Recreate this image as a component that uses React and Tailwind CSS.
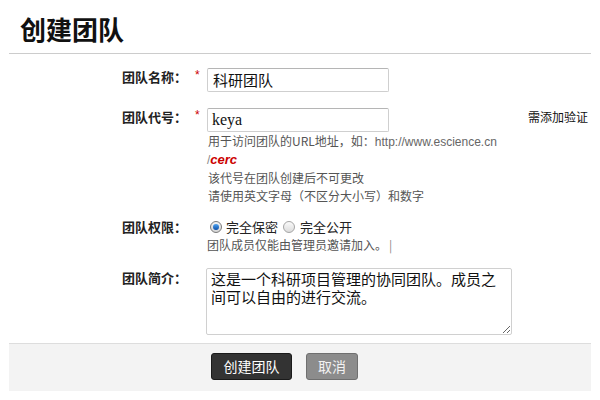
const CJK = { fontFamily: "'Noto Sans CJK SC', 'Noto Sans', sans-serif" };

function Label({ children }) {
  return (
    <div className="w-[73px] shrink-0 text-[13px] font-bold leading-[18px] text-[#222]" style={CJK}>
      {children}
    </div>
  );
}

function Star({ show = true }) {
  return (
    <div className="w-[12px] shrink-0 text-[12px] leading-[14px] text-[#c00]" style={{ fontFamily: "'Liberation Sans', sans-serif" }}>
      {show ? '*' : ''}
    </div>
  );
}

function Radio({ checked }) {
  return checked ? (
    <span className="flex h-[12px] w-[12px] items-center justify-center rounded-full border border-[#7a7a7a] bg-gradient-to-b from-[#f4f4f4] to-[#d6d6d6]">
      <span className="block h-[6px] w-[6px] rounded-full bg-gradient-to-b from-[#4fa3f0] to-[#0b4fa8]" />
    </span>
  ) : (
    <span className="block h-[12px] w-[12px] rounded-full border border-[#a5a5a5] bg-gradient-to-b from-[#fafafa] to-[#dcdcdc]" />
  );
}

export default function App() {
  return (
    <div className="h-[400px] w-[600px] overflow-hidden bg-white">
      <div className="mx-[9px] h-[54px] border-b border-[#cccccc] pl-[11px] pt-[13px]">
        <h1 className="text-[26px] font-bold leading-[32px] text-[#111]" style={CJK}>创建团队</h1>
      </div>

      <div className="mt-[14px] flex pl-[122px]">
        <Label>团队名称：</Label>
        <Star />
        <div className="flex h-[24px] w-[182px] items-center rounded-[2px] border border-[#cfcfcf] border-t-[#b5b5b5] px-[5px] text-[15px] text-[#111]" style={CJK}>
          科研团队
        </div>
      </div>

      <div className="mt-[16px] flex pl-[122px]">
        <Label>团队代号：</Label>
        <Star />
        <div className="flex flex-col">
          <div className="flex items-start">
            <div className="flex h-[24px] w-[182px] items-center rounded-[2px] border border-[#cfcfcf] border-t-[#b5b5b5] px-[4px] text-[16px] text-[#111]" style={{ fontFamily: "'Liberation Serif', serif" }}>
              keya
            </div>
            <div className="ml-[139px] mt-[1px] text-[12px] leading-[16px] text-[#111]" style={CJK}>需添加验证</div>
          </div>
          <div className="text-[12px] leading-[18px] text-[#555]" style={CJK}>
            <div className="pl-[1px]">
              用于访问团队的URL地址，如：
              <span className="text-[#666]" style={{ fontFamily: "'Liberation Sans', sans-serif" }}>http://www.escience.cn</span>
            </div>
            <div style={{ fontFamily: "'Liberation Sans', sans-serif" }}>
              <span className="text-[#888]">/</span>
              <span className="text-[13px] font-bold italic text-[#c00]">cerc</span>
            </div>
            <div className="pl-[1px]">该代号在团队创建后不可更改</div>
            <div className="pl-[1px]">请使用英文字母（不区分大小写）和数字</div>
          </div>
        </div>
      </div>

      <div className="mt-[13px] flex pl-[122px]">
        <Label>团队权限：</Label>
        <Star show={false} />
        <div className="flex flex-col">
          <div className="flex h-[18px] items-center text-[13px] text-[#222]" style={CJK}>
            <span className="ml-[3px]"><Radio checked /></span>
            <span className="ml-[4px]">完全保密</span>
            <span className="ml-[5px]"><Radio /></span>
            <span className="ml-[5px]">完全公开</span>
          </div>
          <div className="text-[12px] leading-[18px] text-[#555]" style={CJK}>
            团队成员仅能由管理员邀请加入。<span className="ml-[2px] text-[#888]">|</span>
          </div>
        </div>
      </div>

      <div className="mt-[14px] flex pl-[122px]">
        <div className="pt-[1px]">
          <Label>团队简介：</Label>
        </div>
        <Star show={false} />
        <textarea
          className="-ml-[1px] h-[67px] w-[306px] rounded-[2px] border border-[#d0d0d0] px-[4px] py-[1px] text-[15px] leading-[18px] text-[#111] outline-none"
          style={CJK}
          defaultValue="这是一个科研项目管理的协同团队。成员之间可以自由的进行交流。"
        />
      </div>

      <div className="mx-[9px] mt-[8px] flex h-[48px] gap-[14px] border-t border-[#dddddd] bg-[#f3f3f3] pl-[202px] pt-[9px]">
        <button className="h-[27px] w-[81px] rounded-[3px] border border-[#1a1a1a] bg-[#333333] text-[14px] text-white" style={CJK}>
          创建团队
        </button>
        <button className="h-[27px] w-[52px] rounded-[3px] border border-[#6f6f6f] bg-[#8c8c8c] text-[14px] text-[#f2f2f2]" style={CJK}>
          取消
        </button>
      </div>
    </div>
  );
}
